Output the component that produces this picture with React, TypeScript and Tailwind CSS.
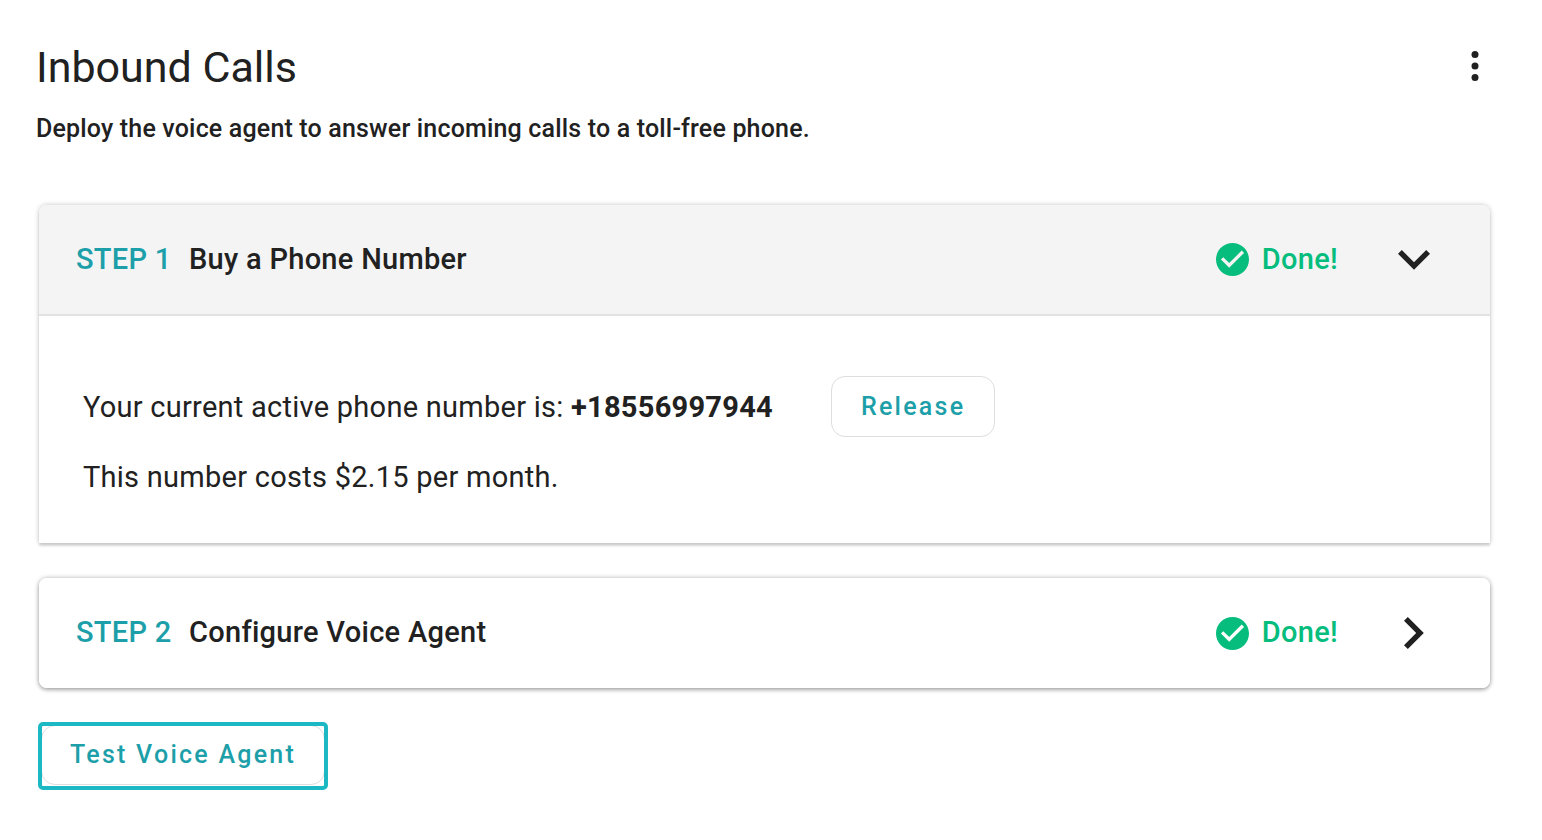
import { useState } from "react";
import type { ReactNode } from "react";

function Done() {
  return (
    <span className="flex items-center gap-[13px] text-[#06bd7e]">
      <svg viewBox="2 2 20 20" className="size-[33px]" fill="currentColor" aria-hidden="true">
        <path d="M12 2C6.48 2 2 6.48 2 12s4.48 10 10 10 10-4.48 10-10S17.52 2 12 2zm-2 15-5-5 1.41-1.41L10 14.17l7.59-7.59L19 8l-9 9z" />
      </svg>
      Done!
    </span>
  );
}

type StepProps = { step: string; title: string; initiallyOpen?: boolean; children?: ReactNode };

function Step({ step, title, initiallyOpen = false, children }: StepProps) {
  const [open, setOpen] = useState(initiallyOpen);
  return (
    <section
      className={
        open
          ? "overflow-hidden rounded-t-lg bg-white shadow-[0_3px_2px_rgba(0,0,0,0.11),0_0_5px_rgba(0,0,0,0.24)]"
          : "overflow-hidden rounded-lg bg-white shadow-[0_2px_4px_rgba(0,0,0,0.26),0_0_5px_rgba(0,0,0,0.24)]"
      }
    >
      <h2>
        <button
          type="button"
          aria-expanded={open}
          onClick={() => setOpen(!open)}
          className={
            open
              ? "flex h-[111px] w-full items-center border-b-2 border-[#e2e2e2] bg-[#f4f4f4] pr-[60px] pl-[37px] text-[29px] font-medium tracking-[0.01em]"
              : "flex h-[110px] w-full items-center bg-white pr-[60px] pl-[37px] text-[29px] font-medium tracking-[0.01em]"
          }
        >
          <span className="w-[113px] text-left text-[#1d9fa9]">{step}</span>
          <span>{title}</span>
          <span className="ml-auto flex items-center gap-[60px]">
            <Done />
            <svg viewBox="0 0 32 32" className={open ? "size-8 rotate-90" : "size-8"} fill="currentColor" aria-hidden="true">
              <path d="M9.8 0 6 3.8 18.2 16 6 28.2 9.8 32l16-16z" />
            </svg>
          </span>
        </button>
      </h2>
      {open && children}
    </section>
  );
}

export default function App() {
  return (
    <main className="pt-10 pr-[52px] pb-10 pl-[39px] font-[Roboto,sans-serif] text-[#212121]">
      <header className="-ml-[3px] flex items-start justify-between">
        <div>
          <h1 className="text-[43px] leading-[54px]">Inbound Calls</h1>
          <p className="mt-5 text-[25px] leading-[30px] font-medium tracking-[0.007em]">
            Deploy the voice agent to answer incoming calls to a toll-free phone.
          </p>
        </div>
        <button type="button" aria-label="More options" className="flex h-[52px] w-[30px] items-center justify-center">
          <svg viewBox="0 0 8 30" className="h-[30px] w-2" fill="currentColor" aria-hidden="true">
            <circle cx="4" cy="3.6" r="3.5" />
            <circle cx="4" cy="15" r="3.5" />
            <circle cx="4" cy="26.4" r="3.5" />
          </svg>
        </button>
      </header>

      <div className="mt-[61px] flex flex-col gap-[35px]">
        <Step step="STEP 1" title="Buy a Phone Number" initiallyOpen>
          <div className="px-11 pt-[60px] pb-[46px] text-[29px] leading-[40px] tracking-[0.009em]">
            <div className="flex items-center gap-[58px]">
              <p>
                Your current active phone number is: <strong className="font-bold">+18556997944</strong>
              </p>
              <button
                type="button"
                className="h-[61px] rounded-[14px] border border-[#dedede] px-[29px] text-[25px] font-medium tracking-[0.09em] text-[#1d9fa9]"
              >
                Release
              </button>
            </div>
            <p className="mt-5">This number costs $2.15 per month.</p>
          </div>
        </Step>
        <Step step="STEP 2" title="Configure Voice Agent" />
      </div>

      <button
        type="button"
        className="relative mt-[37px] ml-[2px] h-[60px] rounded-[14px] border border-[#dedede] px-7 text-[25px] font-medium tracking-[0.09em] text-[#1d9fa9] after:absolute after:-inset-x-1 after:-top-1 after:-bottom-1.5 after:rounded-[5px] after:border-4 after:border-[#1cb8c3]"
      >
        Test Voice Agent
      </button>
    </main>
  );
}
